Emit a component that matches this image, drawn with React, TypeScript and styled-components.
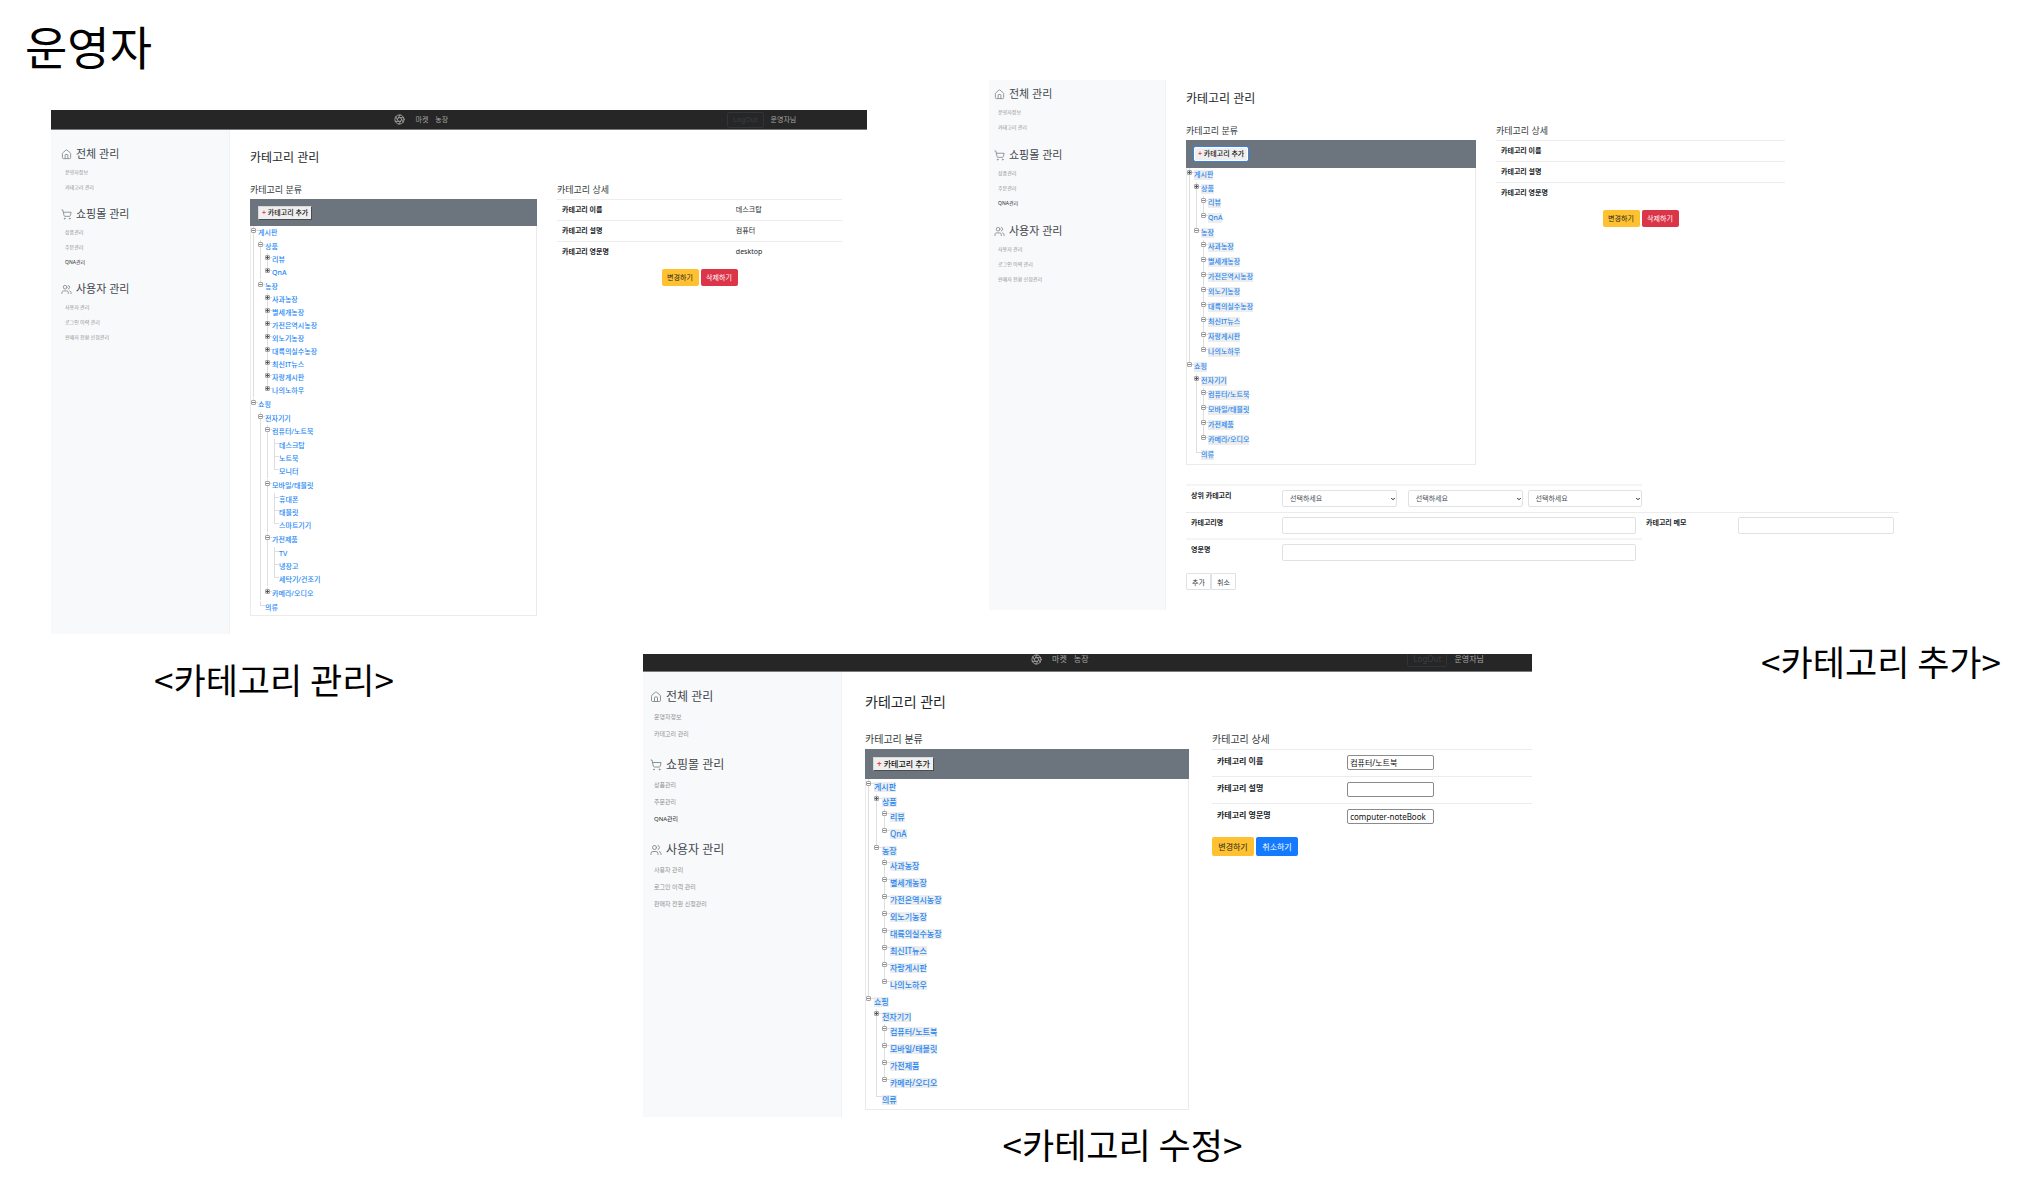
import React, { useState } from "react";
import styled, { createGlobalStyle, css, ThemeProvider } from "styled-components";
import { Aperture, ChevronDown, House, ShoppingCart, Users } from "lucide-react";

type Metrics = {
  tiny: number;
  small: number;
  label: number;
  heading: number;
  title: number;
  icon: number;
  sideWidth: number;
  sideTop: number;
  sideLeft: number;
  sideGap: number;
  sideLine: number;
  itemLine: number;
  mainPad: string;
  titleGap: number;
  labelLine: number;
  columns: string;
  columnGap: number;
  bar: number;
  row: number;
  leafGap: number;
  groupGap: number;
  indent: number;
  treeEnd: number;
  cell: number;
  button: number;
  buttonWidth: number;
};

const base: Metrics = {
  tiny: 5,
  small: 7,
  label: 9,
  heading: 11,
  title: 12,
  icon: 11,
  sideWidth: 179,
  sideTop: 16,
  sideLeft: 10,
  sideGap: 11,
  sideLine: 16,
  itemLine: 15,
  mainPad: "18px 25px 18px 20px",
  titleGap: 14,
  labelLine: 16,
  columns: "minmax(0, 287fr) minmax(0, 285fr)",
  columnGap: 20,
  bar: 27,
  row: 13,
  leafGap: 0,
  groupGap: 1,
  indent: 7,
  treeEnd: 0,
  cell: 3,
  button: 17,
  buttonWidth: 37,
};

const manageMetrics: Metrics = base;

const addMetrics: Metrics = {
  ...base,
  sideWidth: 177,
  sideTop: 6,
  sideLeft: 5,
  sideGap: 12,
  mainPad: "9px 0 20px 20px",
  columns: "minmax(0, 290fr) minmax(0, 289fr) minmax(0, 94fr)",
  bar: 28,
  row: 14,
  leafGap: 1,
  groupGap: 0,
  treeEnd: 2,
};

const editMetrics: Metrics = {
  ...base,
  tiny: 6,
  small: 8,
  label: 10,
  heading: 12,
  title: 14,
  icon: 12,
  sideWidth: 199,
  sideLeft: 7,
  sideGap: 13,
  sideLine: 18,
  itemLine: 17,
  mainPad: "20px 0 7px 23px",
  titleGap: 18,
  labelLine: 18,
  columns: "minmax(0, 324fr) minmax(0, 320fr)",
  columnGap: 23,
  bar: 30,
  row: 15,
  leafGap: 2,
  groupGap: 0,
  indent: 8,
  treeEnd: 2,
  cell: 4,
  button: 19,
  buttonWidth: 42,
};

const px = (key: keyof Metrics) => (p: any) => `${p.theme[key]}px`;

const GlobalStyle = createGlobalStyle`
  *, *::before, *::after { box-sizing: border-box; }
  body {
    margin: 0;
    background: #fff;
    color: #343a40;
    font-family: "Noto Sans", "Noto Sans CJK KR", sans-serif;
  }
  h1, h2, h3, h4, p, ul, figure { margin: 0; padding: 0; }
  ul { list-style: none; }
  a { text-decoration: none; color: inherit; }
  button, input, select { font-family: inherit; margin: 0; }
`;

const Slide = styled.main`
  padding: 18px 0 32px;
`;

const SlideTitle = styled.h1`
  padding-left: 25px;
  font-size: 46px;
  line-height: 58px;
  font-weight: 400;
  color: #000;
`;

const UpperRow = styled.div`
  display: grid;
  grid-template-columns: minmax(0, 816fr) minmax(0, 910fr);
  column-gap: 122px;
  align-items: start;
  padding: 4px 137px 6px 51px;
`;

const Lowered = styled.div`
  padding-top: 30px;
`;

const LowerRow = styled.div`
  display: grid;
  grid-template-columns: minmax(0, 592fr) minmax(0, 889fr) minmax(0, 504fr);
  align-items: start;
  padding-left: 51px;
`;

const Caption = styled.p<{ $pad: string; $align: string }>`
  padding: ${(p) => p.$pad};
  text-align: ${(p) => p.$align};
  font-family: "Noto Sans CJK KR", "Noto Sans", sans-serif;
  font-size: 35px;
  line-height: 42px;
  color: #000;
  white-space: nowrap;
`;

const CenterScreen = styled.div`
  padding-top: 14px;
`;

const Navbar = styled.header<{ $split: string; $clip?: boolean }>`
  display: grid;
  grid-template-columns: ${(p) => p.$split};
  align-items: center;
  align-content: center;
  height: ${(p) => (p.$clip ? 18 : 20)}px;
  padding-bottom: ${(p) => (p.$clip ? 7 : 0)}px;
  overflow: hidden;
  background: #262626;
  border-bottom: 1px solid #77797b;
  color: #a5a5a5;
  font-size: ${px("small")};
  line-height: 12px;
`;

const NavGroup = styled.nav<{ $gap: number }>`
  display: flex;
  align-items: center;
  gap: ${(p) => p.$gap}px;
  grid-column: 2;
  white-space: nowrap;
`;

const BrandLink = styled.a`
  display: flex;
  margin-right: 3px;
`;

const UserGroup = styled.div`
  display: flex;
  align-items: center;
  gap: 7px;
  grid-column: 4;
  white-space: nowrap;
`;

const LogOutButton = styled.button`
  height: 16px;
  padding: 0 5px;
  background: transparent;
  border: 1px solid #303338;
  border-radius: 2px;
  color: #3a3f45;
  font-size: ${px("small")};
  line-height: 12px;
`;

const Body = styled.div`
  display: flex;
`;

const Sidebar = styled.aside`
  flex: none;
  width: ${px("sideWidth")};
  padding: ${px("sideTop")} 0 0 ${px("sideLeft")};
  background: #f8f9fb;
  border-right: 1px solid #f0f1f3;
`;

const SideSection = styled.section`
  margin-bottom: ${px("sideGap")};
`;

const SideHeading = styled.h3`
  display: flex;
  align-items: center;
  gap: 4px;
  margin-bottom: 3px;
  font-size: ${px("heading")};
  line-height: ${px("sideLine")};
  font-weight: 400;
  color: #42474d;
  svg { color: #8d9194; }
`;

const SideLink = styled.a<{ $active?: boolean }>`
  display: block;
  padding-left: 4px;
  font-size: ${px("tiny")};
  line-height: ${px("itemLine")};
  color: ${(p) => (p.$active ? "#2b2b2b" : "#8f8f8f")};
`;

const Main = styled.div`
  flex: 1;
  min-width: 0;
  padding: ${(p: any) => p.theme.mainPad};
`;

const PageTitle = styled.h2`
  margin-bottom: ${px("titleGap")};
  font-size: ${px("title")};
  line-height: 20px;
  font-weight: 400;
  color: #212529;
`;

const Columns = styled.div`
  display: grid;
  grid-template-columns: ${(p: any) => p.theme.columns};
  column-gap: ${px("columnGap")};
  align-items: start;
`;

const SectionTitle = styled.h3`
  margin-bottom: 1px;
  font-size: ${px("label")};
  line-height: ${px("labelLine")};
  font-weight: 400;
  color: #343a40;
`;

const TreeBox = styled.div`
  padding-bottom: ${px("treeEnd")};
  border: solid #ebebeb;
  border-width: 0 1px 1px;
`;

const TreeBar = styled.div`
  display: flex;
  align-items: center;
  height: ${px("bar")};
  margin: 0 -1px;
  padding-left: 8px;
  background: #6c757d;
`;

const AddButton = styled.button<{ $focused?: boolean }>`
  padding: 0 3px;
  height: 14px;
  background: #efefef;
  border: 1px solid;
  border-color: #d8d8d8 #4d4d4d #4d4d4d #d8d8d8;
  color: #111;
  font-size: ${px("small")};
  font-weight: 500;
  line-height: 12px;
  white-space: nowrap;
  ${(p) =>
    p.$focused &&
    css`
      border-color: #fff;
      border-radius: 1px;
      outline: 1px solid #3b82e0;
    `}
`;

const Plus = styled.span`
  color: #e23c4b;
  font-weight: 700;
`;

const Branch = styled.ul<{ $root?: boolean; $top?: boolean }>`
  margin-left: ${(p: any) => (p.$root ? 0 : p.theme.indent)}px;
  margin-top: ${(p: any) => (p.$top ? p.theme.groupGap : 0)}px;
  margin-bottom: ${(p: any) => (p.$root ? 0 : p.theme.groupGap)}px;
`;

const Node = styled.li<{ $leaf: boolean; $plain?: boolean }>`
  padding-bottom: ${(p: any) => (p.$leaf && !p.$plain ? p.theme.leafGap : 0)}px;
  background: linear-gradient(#dedede, #dedede) 2px 0 / 1px 100% no-repeat;
  &:last-child {
    background-size: 1px 5px;
  }
`;

const NodeRow = styled.div`
  display: flex;
  height: ${px("row")};
  align-items: center;
`;

const Joint = styled.span`
  display: flex;
  flex: none;
  align-self: flex-start;
  align-items: center;
  width: ${px("indent")};
  padding-top: 2px;
  &::after {
    content: "";
    flex: 1;
    height: 1px;
    background: #dedede;
  }
`;

const Twig = styled(Joint)`
  padding: 4px 0 0 2px;
`;

const Toggle = styled.button<{ $open: boolean }>`
  width: 5px;
  height: 5px;
  padding: 0;
  border: 1px solid #a6a6a6;
  border-radius: 1px;
  background: ${(p) =>
    p.$open
      ? "linear-gradient(#888, #888) center / 3px 1px no-repeat #fff"
      : "linear-gradient(#555, #555) center / 3px 1px no-repeat, linear-gradient(#555, #555) center / 1px 3px no-repeat #ddd"};
`;

const NodeLink = styled.a<{ $marked?: boolean }>`
  font-size: ${px("small")};
  line-height: 10px;
  font-weight: 500;
  color: #1e88f5;
  background: ${(p) => (p.$marked ? "#ededed" : "transparent")};
  white-space: nowrap;
`;

const DetailTable = styled.table`
  width: 100%;
  border-collapse: collapse;
  table-layout: fixed;
  font-size: ${px("small")};
  line-height: 14px;
  color: #212529;
  tr { border-top: 1px solid #ebecee; }
  th {
    padding: ${px("cell")} 5px;
    text-align: left;
    vertical-align: top;
    font-weight: 700;
  }
  td { padding: ${px("cell")} 5px; }
`;

const EditTable = styled(DetailTable)`
  th { width: 41%; }
  td { padding: 5px 4px 6px; }
`;

const ViewTable = styled(DetailTable)`
  th { width: 61%; }
`;

const SmallInput = styled.input`
  display: block;
  width: 87px;
  height: 15px;
  padding: 0 2px;
  border: 1px solid #8a8a8a;
  border-radius: 2px;
  background: #fff;
  color: #111;
  font-size: ${px("small")};
`;

const Actions = styled.div<{ $start?: boolean }>`
  display: flex;
  gap: 2px;
  justify-content: ${(p) => (p.$start ? "flex-start" : "center")};
  padding-top: 7px;
`;

const tones = {
  warning: ["#ffc12f", "#212529"],
  danger: ["#dc3548", "#fff"],
  primary: ["#147bff", "#fff"],
};

const ActionButton = styled.button<{ $tone: keyof typeof tones }>`
  width: ${px("buttonWidth")};
  height: ${px("button")};
  padding: 0;
  border: 0;
  border-radius: 2px;
  background: ${(p) => tones[p.$tone][0]};
  color: ${(p) => tones[p.$tone][1]};
  font-size: ${px("small")};
  line-height: 14px;
`;

const AddForm = styled.form`
  padding-top: 19px;
`;

const FormRow = styled.div<{ $columns: string; $wide?: boolean; $end?: number }>`
  display: grid;
  grid-template-columns: ${(p) => p.$columns};
  width: ${(p) => (p.$wide ? "100%" : "64%")};
  padding: 4px ${(p) => p.$end || 0}px ${(p) => (p.$wide ? "4px" : "5px")} 0;
  border-top: ${(p) => (p.$wide ? "1px solid #ebecee" : "2px solid #f5f5f6")};
`;

const FieldLabel = styled.label<{ $inset?: number }>`
  padding-left: ${(p) => p.$inset || 5}px;
  font-size: 7px;
  line-height: 12px;
  font-weight: 700;
  color: #212529;
`;

const FieldInput = styled.input`
  width: 100%;
  height: 17px;
  padding: 0 6px;
  border: 1px solid #dfe2e5;
  border-radius: 2px;
  font-size: 7px;
`;

const SelectWrap = styled.div<{ $column: number }>`
  position: relative;
  grid-column: ${(p) => p.$column};
  svg {
    position: absolute;
    right: 1px;
    top: 6px;
    pointer-events: none;
    color: #222;
  }
`;

const FieldSelect = styled.select`
  display: block;
  appearance: none;
  width: 100%;
  height: 17px;
  padding: 0 7px;
  border: 1px solid #dfe2e5;
  border-radius: 2px;
  background: #fff;
  color: #495057;
  font-size: 7px;
`;

const FormActions = styled.div`
  display: flex;
  padding-top: 7px;
`;

const PlainButton = styled.button`
  width: 25px;
  height: 17px;
  padding: 0;
  border: 1px solid #dfe2e5;
  border-radius: 1px;
  background: #fff;
  color: #343a40;
  font-size: 7px;
`;

type Item = { name: string; open?: boolean; toggle?: boolean; children?: Item[] };

const leaves = (names: string[], toggle: boolean, open = false): Item[] =>
  names.map((name) => ({ name, toggle, open }));

const farms = ["사과농장", "별세개농장", "가전은역시농장", "외노기농장", "대륙의실수농장", "최신IT뉴스", "자랑게시판", "나의노하우"];
const devices = ["컴퓨터/노트북", "모바일/태블릿", "가전제품", "카메라/오디오"];

const fullTree: Item[] = [
  {
    name: "게시판", toggle: true, open: true,
    children: [
      { name: "상품", toggle: true, open: true, children: leaves(["리뷰", "QnA"], true) },
      { name: "농장", toggle: true, open: true, children: leaves(farms, true) },
    ],
  },
  {
    name: "쇼핑", toggle: true, open: true,
    children: [
      {
        name: "전자기기", toggle: true, open: true,
        children: [
          { name: devices[0], toggle: true, open: true, children: leaves(["데스크탑", "노트북", "모니터"], false) },
          { name: devices[1], toggle: true, open: true, children: leaves(["휴대폰", "태블릿", "스마트기기"], false) },
          { name: devices[2], toggle: true, open: true, children: leaves(["TV", "냉장고", "세탁기/건조기"], false) },
          { name: devices[3], toggle: true },
        ],
      },
      { name: "의류" },
    ],
  },
];

const shortTree = (boardOpen: boolean): Item[] => [
  {
    name: "게시판", toggle: true, open: boardOpen,
    children: [
      { name: "상품", toggle: true, children: leaves(["리뷰", "QnA"], true, true) },
      { name: "농장", toggle: true, open: true, children: leaves(farms, true, true) },
    ],
  },
  {
    name: "쇼핑", toggle: true, open: true,
    children: [
      { name: "전자기기", toggle: true, children: leaves(devices, true, true) },
      { name: "의류" },
    ],
  },
];

function TreeNodes({ items, depth, marked }: { items: Item[]; depth: number; marked?: boolean }) {
  return (
    <Branch $root={depth === 0} $top={depth % 2 === 1}>
      {items.map((item) => (
        <Node key={item.name} $leaf={!item.children} $plain={!item.toggle}>
          <NodeRow>
            {item.toggle ? (
              <Joint>
                <Toggle type="button" $open={!!item.open} aria-label={item.name} />
              </Joint>
            ) : (
              <Twig />
            )}
            <NodeLink href="#" $marked={marked}>{item.name}</NodeLink>
          </NodeRow>
          {item.children && <TreeNodes items={item.children} depth={depth + 1} marked={marked} />}
        </Node>
      ))}
    </Branch>
  );
}

function CategoryTree({ items, marked, focused }: { items: Item[]; marked?: boolean; focused?: boolean }) {
  return (
    <section>
      <SectionTitle>카테고리 분류</SectionTitle>
      <TreeBox>
        <TreeBar>
          <AddButton type="button" $focused={focused}>
            <Plus>+</Plus> 카테고리 추가
          </AddButton>
        </TreeBar>
        <TreeNodes items={items} depth={0} marked={marked} />
      </TreeBox>
    </section>
  );
}

const menu = [
  { title: "전체 관리", Icon: House, links: ["운영자정보", "카테고리 관리"] },
  { title: "쇼핑몰 관리", Icon: ShoppingCart, links: ["상품관리", "주문관리", "QNA관리"] },
  { title: "사용자 관리", Icon: Users, links: ["사용자 관리", "로그인 이력 관리", "판매자 전환 신청관리"] },
];

function SideMenu({ iconSize = 11 }: { iconSize?: number }) {
  return (
    <Sidebar>
      {menu.map(({ title, Icon, links }) => (
        <SideSection key={title}>
          <SideHeading>
            <Icon size={iconSize} strokeWidth={2} />
            {title}
          </SideHeading>
          {links.map((name) => (
            <SideLink key={name} href="#" $active={name === "QNA관리"}>{name}</SideLink>
          ))}
        </SideSection>
      ))}
    </Sidebar>
  );
}

function TopBar({ split, clip }: { split: string; clip?: boolean }) {
  return (
    <Navbar $split={split} $clip={clip}>
      <NavGroup $gap={7}>
        <BrandLink href="#" aria-label="홈"><Aperture size={11} /></BrandLink>
        <a href="#">마켓</a>
        <a href="#">농장</a>
      </NavGroup>
      <UserGroup>
        <LogOutButton type="button">LogOut</LogOutButton>
        <span>운영자님</span>
      </UserGroup>
    </Navbar>
  );
}

const fields = ["카테고리 이름", "카테고리 설명", "카테고리 영문명"];

function DetailView({ values }: { values: string[] }) {
  return (
    <section>
      <SectionTitle>카테고리 상세</SectionTitle>
      <ViewTable>
        <tbody>
          {fields.map((name, i) => (
            <tr key={name}>
              <th scope="row">{name}</th>
              <td>{values[i]}</td>
            </tr>
          ))}
        </tbody>
      </ViewTable>
      <Actions>
        <ActionButton type="button" $tone="warning">변경하기</ActionButton>
        <ActionButton type="button" $tone="danger">삭제하기</ActionButton>
      </Actions>
    </section>
  );
}

function DetailEdit() {
  const [values, setValues] = useState(["컴퓨터/노트북", "", "computer-noteBook"]);
  return (
    <section>
      <SectionTitle>카테고리 상세</SectionTitle>
      <EditTable>
        <tbody>
          {fields.map((name, i) => (
            <tr key={name}>
              <th scope="row"><label htmlFor={`edit-${i}`}>{name}</label></th>
              <td>
                <SmallInput
                  id={`edit-${i}`}
                  value={values[i]}
                  onChange={(e) => setValues(values.map((v, k) => (k === i ? e.target.value : v)))}
                />
              </td>
            </tr>
          ))}
        </tbody>
      </EditTable>
      <Actions $start>
        <ActionButton type="button" $tone="warning">변경하기</ActionButton>
        <ActionButton type="button" $tone="primary">취소하기</ActionButton>
      </Actions>
    </section>
  );
}

function NewCategoryForm() {
  return (
    <AddForm onSubmit={(e) => e.preventDefault()}>
      <FormRow $columns="96px minmax(0, 115fr) 11px minmax(0, 115fr) 5px minmax(0, 115fr)">
        <FieldLabel htmlFor="parent-2">상위 카테고리</FieldLabel>
        {[2, 4, 6].map((column) => (
          <SelectWrap key={column} $column={column}>
            <FieldSelect id={`parent-${column}`} aria-label="상위 카테고리">
              <option>선택하세요</option>
            </FieldSelect>
            <ChevronDown size={6} strokeWidth={4} />
          </SelectWrap>
        ))}
      </FormRow>
      <FormRow $wide $end={5} $columns="96px minmax(0, 354fr) 102px minmax(0, 156fr)">
        <FieldLabel htmlFor="new-name">카테고리명</FieldLabel>
        <FieldInput id="new-name" />
        <FieldLabel htmlFor="new-memo" $inset={10}>카테고리 메모</FieldLabel>
        <FieldInput id="new-memo" />
      </FormRow>
      <FormRow $end={6} $columns="96px minmax(0, 1fr)">
        <FieldLabel htmlFor="new-english">영문명</FieldLabel>
        <FieldInput id="new-english" />
      </FormRow>
      <FormActions>
        <PlainButton type="submit">추가</PlainButton>
        <PlainButton type="button">취소</PlainButton>
      </FormActions>
    </AddForm>
  );
}

export default function App() {
  return (
    <Slide>
      <GlobalStyle />
      <SlideTitle>운영자</SlideTitle>
      <UpperRow>
        <ThemeProvider theme={manageMetrics}>
          <Lowered>
            <TopBar split="345fr auto 280fr auto 71fr" />
            <Body>
              <SideMenu />
              <Main>
                <PageTitle>카테고리 관리</PageTitle>
                <Columns>
                  <CategoryTree items={fullTree} />
                  <DetailView values={["데스크탑", "컴퓨터", "desktop"]} />
                </Columns>
              </Main>
            </Body>
          </Lowered>
        </ThemeProvider>
        <ThemeProvider theme={addMetrics}>
          <Body>
            <SideMenu />
            <Main>
              <PageTitle>카테고리 관리</PageTitle>
              <Columns>
                <CategoryTree items={shortTree(false)} marked focused />
                <DetailView values={["", "", ""]} />
              </Columns>
              <NewCategoryForm />
            </Main>
          </Body>
        </ThemeProvider>
      </UpperRow>
      <LowerRow>
        <Caption $pad="18px 0 0 103px" $align="left">&lt;카테고리 관리&gt;</Caption>
        <div>
          <ThemeProvider theme={editMetrics}>
            <CenterScreen>
              <TopBar clip split="387fr auto 318fr auto 48fr" />
              <Body>
                <SideMenu iconSize={editMetrics.icon} />
                <Main>
                  <PageTitle>카테고리 관리</PageTitle>
                  <Columns>
                    <CategoryTree items={shortTree(true)} marked />
                    <DetailEdit />
                  </Columns>
                </Main>
              </Body>
            </CenterScreen>
          </ThemeProvider>
          <Caption $pad="6px 0 0 70px" $align="center">&lt;카테고리 수정&gt;</Caption>
        </div>
        <Caption $pad="0 35px 0 0" $align="right">&lt;카테고리 추가&gt;</Caption>
      </LowerRow>
    </Slide>
  );
}
